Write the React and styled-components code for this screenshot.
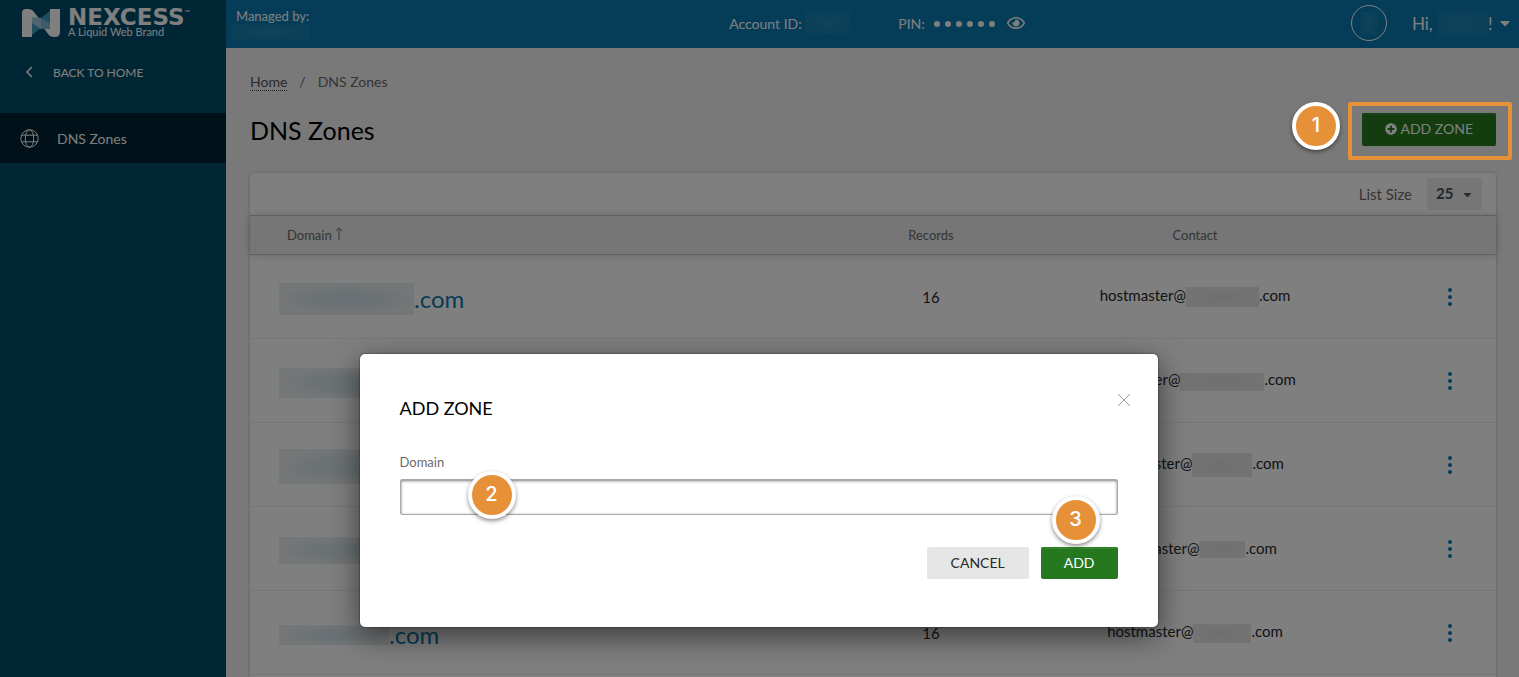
import React, { useState } from 'react';
import styled, { createGlobalStyle, css } from 'styled-components';
import { FaCaretDown, FaPlusCircle, FaRegEye } from 'react-icons/fa';

const GlobalStyle = createGlobalStyle`
  *, *::before, *::after {
    box-sizing: border-box;
  }

  body {
    margin: 0;
    background: #f2f2f2;
    color: #24282b;
    font-family: Lato, 'Liberation Sans', sans-serif;
    font-size: 14px;
  }

  button, input, select {
    font-family: inherit;
  }
`;

const Shell = styled.div`
  position: relative;
  display: flex;
  height: 100vh;
  overflow: hidden;
`;

/* Sidebar */

const Sidebar = styled.aside`
  flex: 0 0 226px;
  background: #004c6a;
  color: #fff;
`;

const Brand = styled.a`
  display: flex;
  align-items: flex-start;
  gap: 8px;
  height: 48px;
  padding: 8px 0 0 22px;
  color: #fff;
  text-decoration: none;
`;

const BrandText = styled.span`
  display: flex;
  flex-direction: column;
`;

const BrandName = styled.span`
  display: flex;
  font: bold 23px/18px 'DejaVu Sans', sans-serif;

  small {
    font: 7px/8px Lato, sans-serif;
  }
`;

const Tagline = styled.span`
  font-size: 11px;
  line-height: 12px;
`;

const NavLink = styled.a`
  display: flex;
  align-items: center;
  height: 50px;
  padding-left: 20px;
  gap: 18px;
  color: #fff;
  font-size: 14px;
  text-decoration: none;
  ${({ $active }) => $active && css`
    background: #002332;
  `}
`;

const BackLink = styled(NavLink)`
  gap: 14px;
  height: 48px;
  margin-bottom: 17px;
  font-size: 12px;
`;

/* Top bar */

const Content = styled.div`
  flex: 1;
  min-width: 0;
`;

const TopBar = styled.header`
  display: grid;
  grid-template-columns: 1fr auto 1fr;
  align-items: center;
  height: 48px;
  padding: 0 6px 2px 5px;
  background: #0a7ab2;
  color: #fff;
`;

const Managed = styled.div`
  display: flex;
  flex-direction: column;
  align-self: start;
  padding-top: 8px;
  font-size: 13px;
  line-height: 16px;

  span {
    padding-left: 5px;
  }
`;

const AccountInfo = styled.div`
  display: flex;
  align-items: center;
  margin-left: 10px;
`;

const Label = styled.span`
  font-size: 14px;
`;

const Pin = styled.div`
  display: flex;
  align-items: center;
  margin-left: 47px;
`;

const PinDots = styled.span`
  display: flex;
  gap: 5px;
  margin: 2px 12px 0 9px;

  i {
    width: 6px;
    height: 6px;
    border-radius: 50%;
    background: #fff;
  }
`;

const PlainButton = styled.button`
  display: flex;
  align-items: center;
  padding: 0;
  border: 0;
  background: none;
  color: inherit;
  cursor: pointer;
`;

const UserMenu = styled(PlainButton)`
  justify-self: end;
  font-size: 17px;
`;

const Avatar = styled.span`
  display: flex;
  align-items: center;
  justify-content: center;
  width: 36px;
  height: 36px;
  margin-right: 25px;
  border: 1px solid #fff;
  border-radius: 50%;
`;

/* Blanked-out private value */
const Redacted = styled.span`
  display: inline-block;
  flex: none;
  width: ${({ $w }) => $w}px;
  height: ${({ $h }) => $h}px;
  vertical-align: middle;
  background: ${({ $tone }) => ({
    bar: 'radial-gradient(closest-side, #2287b2, #147fb2)',
    link: 'radial-gradient(closest-side, #d6e2e9, #d9e4ea 50%, #e9eef0)',
    text: 'radial-gradient(closest-side, #dfdfdf, #e7e7e7)',
  })[$tone]};
`;

/* Page */

const Main = styled.main`
  padding: 24px 23px 0 24px;
`;

const Breadcrumb = styled.nav`
  display: flex;
  gap: 12px;
  color: #6b6b6b;
  font-size: 14px;
  line-height: 20px;

  a {
    height: 19px;
    border-bottom: 1px dotted #444;
    color: #555;
    text-decoration: none;
  }
`;

const PageHead = styled.div`
  display: flex;
  align-items: center;
  justify-content: space-between;
  padding: 21px 0 27px;
`;

const Title = styled.h1`
  margin: 0;
  padding-top: 2px;
  color: #000;
  font-size: 25px;
  font-weight: 400;
  line-height: 31px;
`;

const Button = styled.button`
  display: flex;
  align-items: center;
  justify-content: center;
  gap: 3px;
  height: ${({ $large }) => ($large ? 33 : 32)}px;
  padding: 0 24px 2px;
  border: 0;
  border-radius: 2px;
  background: #e6e6e6;
  color: #24282b;
  font-size: 14px;
  cursor: pointer;
  ${({ $primary }) => $primary && css`
    padding: 0 23px 2px;
    background: #26781f;
    box-shadow: inset 0 2px 0 #30832a;
    color: #fff;
  `}
`;

const Card = styled.section`
  padding-bottom: 24px;
  border-radius: 4px 4px 0 0;
  background: #fff;
  box-shadow: 0 0 3px rgba(0, 0, 0, 0.25);
`;

const Toolbar = styled.div`
  display: flex;
  align-items: center;
  justify-content: flex-end;
  gap: 15px;
  height: 42px;
  padding: 0 14px 0 0;
  color: #6b6b6b;

  label {
    font-size: 15px;
  }
`;

const SelectBox = styled.div`
  display: grid;
  align-items: center;
  border-radius: 2px;
  background: #ececec;
  color: #55585c;

  select, svg {
    grid-area: 1 / 1;
  }

  select {
    width: 55px;
    height: 32px;
    padding: 0 0 2px 9px;
    border: 0;
    background: none;
    appearance: none;
    color: #484c50;
    font-size: 15px;
    font-weight: 700;
  }

  svg {
    justify-self: end;
    margin-right: 8px;
    pointer-events: none;
  }
`;

const Table = styled.table`
  width: 100%;
  border-collapse: collapse;
  table-layout: fixed;

  thead {
    box-shadow: 0 0 8px rgba(0, 0, 0, 0.2);
  }
`;

const Th = styled.th`
  width: ${({ $w }) => $w || 'auto'};
  height: 39px;
  padding: 0;
  border: solid #bfc0c8;
  border-width: 1px 0;
  background: #ededed;
  color: #6b6b6b;
  font-size: 13px;
  font-weight: 400;
`;

const SortButton = styled(PlainButton)`
  gap: 3px;
  margin-left: 37px;
  font-size: 13px;

  svg {
    margin-bottom: 4px;
  }
`;

const Td = styled.td`
  height: 84px;
  padding: 0;
  border-bottom: 1px solid #eee;
  font-size: 15px;
  text-align: center;
  white-space: nowrap;
`;

const DomainLink = styled.a`
  display: flex;
  align-items: center;
  padding: 4px 0 0 29px;
  color: #0a7ab2;
  font-size: 24px;
  text-decoration: none;
`;

const RowMenu = styled(PlainButton)`
  flex-direction: column;
  gap: 3px;
  margin: 0 44px 0 auto;

  i {
    width: 4px;
    height: 4px;
    border-radius: 50%;
    background: #0a7ab2;
  }
`;

/* Dialog */

const Overlay = styled.div`
  position: absolute;
  inset: 0;
  padding: 354px 24px 0 22px;
  background: rgba(0, 0, 0, 0.5);
`;

const Dialog = styled.div`
  position: relative;
  max-width: 798px;
  margin: 0 auto;
  padding: 42px 40px 48px;
  border-radius: 5px;
  background: #fff;
  box-shadow: 0 0 2px rgba(0, 0, 0, 0.7), 0 9px 30px rgba(0, 0, 0, 0.55);
`;

const DialogTitle = styled.h2`
  margin: 0 0 34px;
  color: #000;
  font-size: 18px;
  font-weight: 400;
  line-height: 24px;
`;

const CloseButton = styled(PlainButton)`
  position: absolute;
  top: 39px;
  right: 27px;
  color: #9a9a9a;
`;

const Field = styled.div`
  display: flex;
  flex-direction: column;
  gap: 9px;

  label {
    color: #6b6b6b;
    font-size: 13px;
    line-height: 16px;
  }

  input {
    height: 36px;
    padding: 0 12px;
    border: 1px solid #a9a9a9;
    border-radius: 2px;
    background: #fff;
    box-shadow: inset 0 1px 3px rgba(0, 0, 0, 0.5);
    font-size: 15px;
    outline: none;
  }
`;

const Actions = styled.div`
  display: flex;
  justify-content: flex-end;
  gap: 12px;
  margin-top: 32px;
`;

/* Numbered steps laid over the screen */

const Step = styled.span`
  display: flex;
  align-items: center;
  justify-content: center;
  width: 48px;
  height: 48px;
  padding-bottom: 2px;
  border: 4px solid #fff;
  border-radius: 50%;
  background: #e69138;
  box-shadow: 0 2px 4px rgba(0, 0, 0, 0.45);
  color: #fff;
  font: 500 20px Inter, sans-serif;
`;

const ZoneHighlight = styled.div`
  position: absolute;
  top: 102px;
  right: 7px;
  display: flex;
  gap: 8px;
  pointer-events: none;
`;

const Frame = styled.span`
  width: 164px;
  height: 58px;
  border: 4px solid #e69138;
  border-radius: 2px;
`;

const InputStep = styled(Step)`
  position: absolute;
  top: 117px;
  left: 108px;
`;

const AddStep = styled(Step)`
  position: absolute;
  top: 142px;
  right: 58px;
`;

const zones = [
  { domain: [135, 32], records: 16, contact: [73, 20] },
  { domain: [134, 30], records: 16, contact: [84, 18] },
  { domain: [130, 35], records: 16, contact: [60, 24] },
  { domain: [128, 27], records: 16, contact: [46, 17] },
  { domain: [110, 20], records: 16, contact: [58, 19] },
];

const LogoMark = () => (
  <svg width="38" height="29" viewBox="0 0 38 29" aria-hidden="true">
    <path d="M0 29V5Q0 1 4 1H7Q10 1 12 4L19 13 28 6V1H38V24Q38 29 33 29H31Q28 29 26 26L19 16 10 24V29Z" fill="#fff" />
    <path d="M19 10 28 3V17L19 11ZM10 13 19 20 10 27Z" fill="#3c9ec6" />
    <path d="M10 9 19 10V21L10 15Z" fill="#a0cbdf" />
    <path d="M19 10 28 15V21L19 21Z" fill="#7ab6d1" />
  </svg>
);

const GlobeIcon = () => (
  <svg width="19" height="19" viewBox="0 0 19 19" fill="none" stroke="currentColor" aria-hidden="true">
    <circle cx="9.5" cy="9.5" r="8.7" />
    <ellipse cx="9.5" cy="9.5" rx="4.2" ry="8.7" />
    <path d="M1.5 6.2H17.5M1.5 12.8H17.5" />
  </svg>
);

const ChevronIcon = () => (
  <svg width="19" height="14" viewBox="0 0 19 14" fill="none" stroke="currentColor" strokeWidth="1.5" aria-hidden="true">
    <path d="M12 2 7 7 12 12" />
  </svg>
);

const ArrowUpIcon = () => (
  <svg width="8" height="13" viewBox="0 0 8 13" fill="none" stroke="currentColor" aria-hidden="true">
    <path d="M4 13V1M.7 4 4 .8 7.3 4" />
  </svg>
);

const CloseIcon = () => (
  <svg width="14" height="14" viewBox="0 0 14 14" fill="none" stroke="currentColor" aria-hidden="true">
    <path d="M1 1 13 13M13 1 1 13" />
  </svg>
);

const ZoneRow = ({ zone }) => (
  <tr>
    <Td>
      <DomainLink href="#zone">
        <Redacted $tone="link" $w={zone.domain[0]} $h={zone.domain[1]} />
        .com
      </DomainLink>
    </Td>
    <Td>{zone.records}</Td>
    <Td>
      hostmaster@
      <Redacted $tone="text" $w={zone.contact[0]} $h={zone.contact[1]} />
      .com
    </Td>
    <Td>
      <RowMenu type="button" aria-label="Zone actions">
        <i /><i /><i />
      </RowMenu>
    </Td>
  </tr>
);

const AddZoneDialog = () => {
  const [domain, setDomain] = useState('');

  return (
    <Dialog role="dialog" aria-labelledby="dialog-title">
      <DialogTitle id="dialog-title">ADD ZONE</DialogTitle>
      <CloseButton type="button" aria-label="Close"><CloseIcon /></CloseButton>
      <Field>
        <label htmlFor="domain">Domain</label>
        <input id="domain" value={domain} onChange={e => setDomain(e.target.value)} />
      </Field>
      <Actions>
        <Button type="button">CANCEL</Button>
        <Button type="button" $primary>ADD</Button>
      </Actions>
      <InputStep>2</InputStep>
      <AddStep>3</AddStep>
    </Dialog>
  );
};

function App() {
  return (
    <Shell>
      <GlobalStyle />
      <Sidebar>
        <Brand href="#home">
          <LogoMark />
          <BrandText>
            <BrandName>NEXCESS<small>™</small></BrandName>
            <Tagline>A Liquid Web Brand</Tagline>
          </BrandText>
        </Brand>
        <BackLink href="#home"><ChevronIcon />BACK TO HOME</BackLink>
        <NavLink href="#dns" $active><GlobeIcon />DNS Zones</NavLink>
      </Sidebar>

      <Content>
        <TopBar>
          <Managed>
            <span>Managed by:</span>
            <Redacted $tone="bar" $w={79} $h={17} />
          </Managed>
          <AccountInfo>
            <Label>Account ID:&nbsp;</Label>
            <Redacted $tone="bar" $w={46} $h={22} />
            <Pin>
              <Label>PIN:</Label>
              <PinDots><i /><i /><i /><i /><i /><i /></PinDots>
              <PlainButton type="button" aria-label="Show PIN"><FaRegEye size={18} /></PlainButton>
            </Pin>
          </AccountInfo>
          <UserMenu type="button">
            <Avatar><Redacted $tone="bar" $w={18} $h={22} /></Avatar>
            Hi,&nbsp;
            <Redacted $tone="bar" $w={51} $h={27} />
            !&nbsp;
            <FaCaretDown size={16} />
          </UserMenu>
        </TopBar>

        <Main>
          <Breadcrumb>
            <a href="#home">Home</a>
            <span>/</span>
            <span>DNS Zones</span>
          </Breadcrumb>
          <PageHead>
            <Title>DNS Zones</Title>
            <Button type="button" $primary $large><FaPlusCircle size={12} />ADD ZONE</Button>
          </PageHead>

          <Card>
            <Toolbar>
              <label htmlFor="list-size">List Size</label>
              <SelectBox>
                <select id="list-size" defaultValue="25">
                  <option>25</option>
                </select>
                <FaCaretDown size={13} />
              </SelectBox>
            </Toolbar>
            <Table>
              <thead>
                <tr>
                  <Th><SortButton type="button">Domain<ArrowUpIcon /></SortButton></Th>
                  <Th $w="264px">Records</Th>
                  <Th $w="264px">Contact</Th>
                  <Th $w="169px" aria-label="Actions" />
                </tr>
              </thead>
              <tbody>
                {zones.map((zone, i) => <ZoneRow key={i} zone={zone} />)}
              </tbody>
            </Table>
          </Card>
        </Main>
      </Content>

      <Overlay>
        <AddZoneDialog />
        <ZoneHighlight>
          <Step>1</Step>
          <Frame />
        </ZoneHighlight>
      </Overlay>
    </Shell>
  );
}

export default App;
